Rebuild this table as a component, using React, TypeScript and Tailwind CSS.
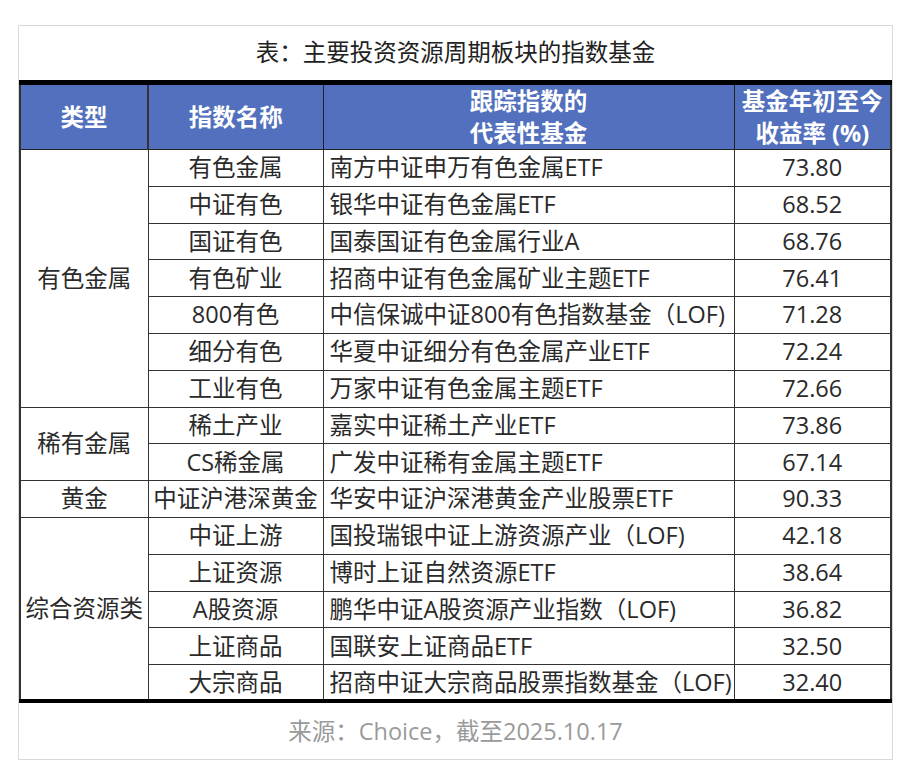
import React from "react";

type Row = { idx: string; fund: string; ret: string };
type Group = { type: string; rows: Row[] };

const groups: Group[] = [
  {
    type: "有色金属",
    rows: [
      { idx: "有色金属", fund: "南方中证申万有色金属ETF", ret: "73.80" },
      { idx: "中证有色", fund: "银华中证有色金属ETF", ret: "68.52" },
      { idx: "国证有色", fund: "国泰国证有色金属行业A", ret: "68.76" },
      { idx: "有色矿业", fund: "招商中证有色金属矿业主题ETF", ret: "76.41" },
      { idx: "800有色", fund: "中信保诚中证800有色指数基金（LOF)", ret: "71.28" },
      { idx: "细分有色", fund: "华夏中证细分有色金属产业ETF", ret: "72.24" },
      { idx: "工业有色", fund: "万家中证有色金属主题ETF", ret: "72.66" },
    ],
  },
  {
    type: "稀有金属",
    rows: [
      { idx: "稀土产业", fund: "嘉实中证稀土产业ETF", ret: "73.86" },
      { idx: "CS稀金属", fund: "广发中证稀有金属主题ETF", ret: "67.14" },
    ],
  },
  {
    type: "黄金",
    rows: [{ idx: "中证沪港深黄金", fund: "华安中证沪深港黄金产业股票ETF", ret: "90.33" }],
  },
  {
    type: "综合资源类",
    rows: [
      { idx: "中证上游", fund: "国投瑞银中证上游资源产业（LOF)", ret: "42.18" },
      { idx: "上证资源", fund: "博时上证自然资源ETF", ret: "38.64" },
      { idx: "A股资源", fund: "鹏华中证A股资源产业指数（LOF)", ret: "36.82" },
      { idx: "上证商品", fund: "国联安上证商品ETF", ret: "32.50" },
      { idx: "大宗商品", fund: "招商中证大宗商品股票指数基金（LOF)", ret: "32.40" },
    ],
  },
];

const font = { fontFamily: '"Open Sans", "Noto Sans CJK SC", sans-serif' };

export default function App() {
  return (
    <div className="w-[910px] h-[780px] bg-white pt-[25px] pl-[18px]" style={font}>
      <div className="w-[875px] border border-[#d9d9d9] bg-white">
        <div className="h-[54px] flex items-center justify-center text-[23.5px] text-[#222]">
          表：主要投资资源周期板块的指数基金
        </div>
        <table className="w-full table-fixed border-collapse text-[23.5px] text-[#2a2a2a] border-t-[5px] border-t-black border-b-[4px] border-b-black">
          <colgroup>
            <col className="w-[128px]" />
            <col className="w-[175px]" />
            <col className="w-[411px]" />
            <col />
          </colgroup>
          <thead>
            <tr className="h-[66px] bg-[#5270bd] text-white font-bold leading-[32px]">
              <th className="border-x-2 border-l-[#333] border-r-[#333] border-b border-b-[#222] font-bold">类型</th>
              <th className="border border-[#222] font-bold">指数名称</th>
              <th className="border border-[#222] font-bold">
                跟踪指数的
                <br />
                代表性基金
              </th>
              <th className="border border-[#222] border-r-2 border-r-[#333] font-bold">
                基金年初至今
                <br />
                收益率 (%)
              </th>
            </tr>
          </thead>
          <tbody>
            {groups.map((g) =>
              g.rows.map((r, i) => (
                <tr key={g.type + r.idx} className="h-[36.8px] leading-none">
                  {i === 0 && (
                    <td
                      rowSpan={g.rows.length}
                      className="border border-[#333] border-l-2 text-center align-middle"
                    >
                      {g.type}
                    </td>
                  )}
                  <td className="border border-[#333] text-center whitespace-nowrap">{r.idx}</td>
                  <td className="border border-[#333] pl-[6px] whitespace-nowrap overflow-visible">{r.fund}</td>
                  <td className="border border-[#333] border-r-2 text-center">{r.ret}</td>
                </tr>
              ))
            )}
          </tbody>
        </table>
        <div className="h-[56px] flex items-center justify-center text-[23.5px] text-[#9a9a9a]">
          来源：Choice，截至2025.10.17
        </div>
      </div>
    </div>
  );
}
